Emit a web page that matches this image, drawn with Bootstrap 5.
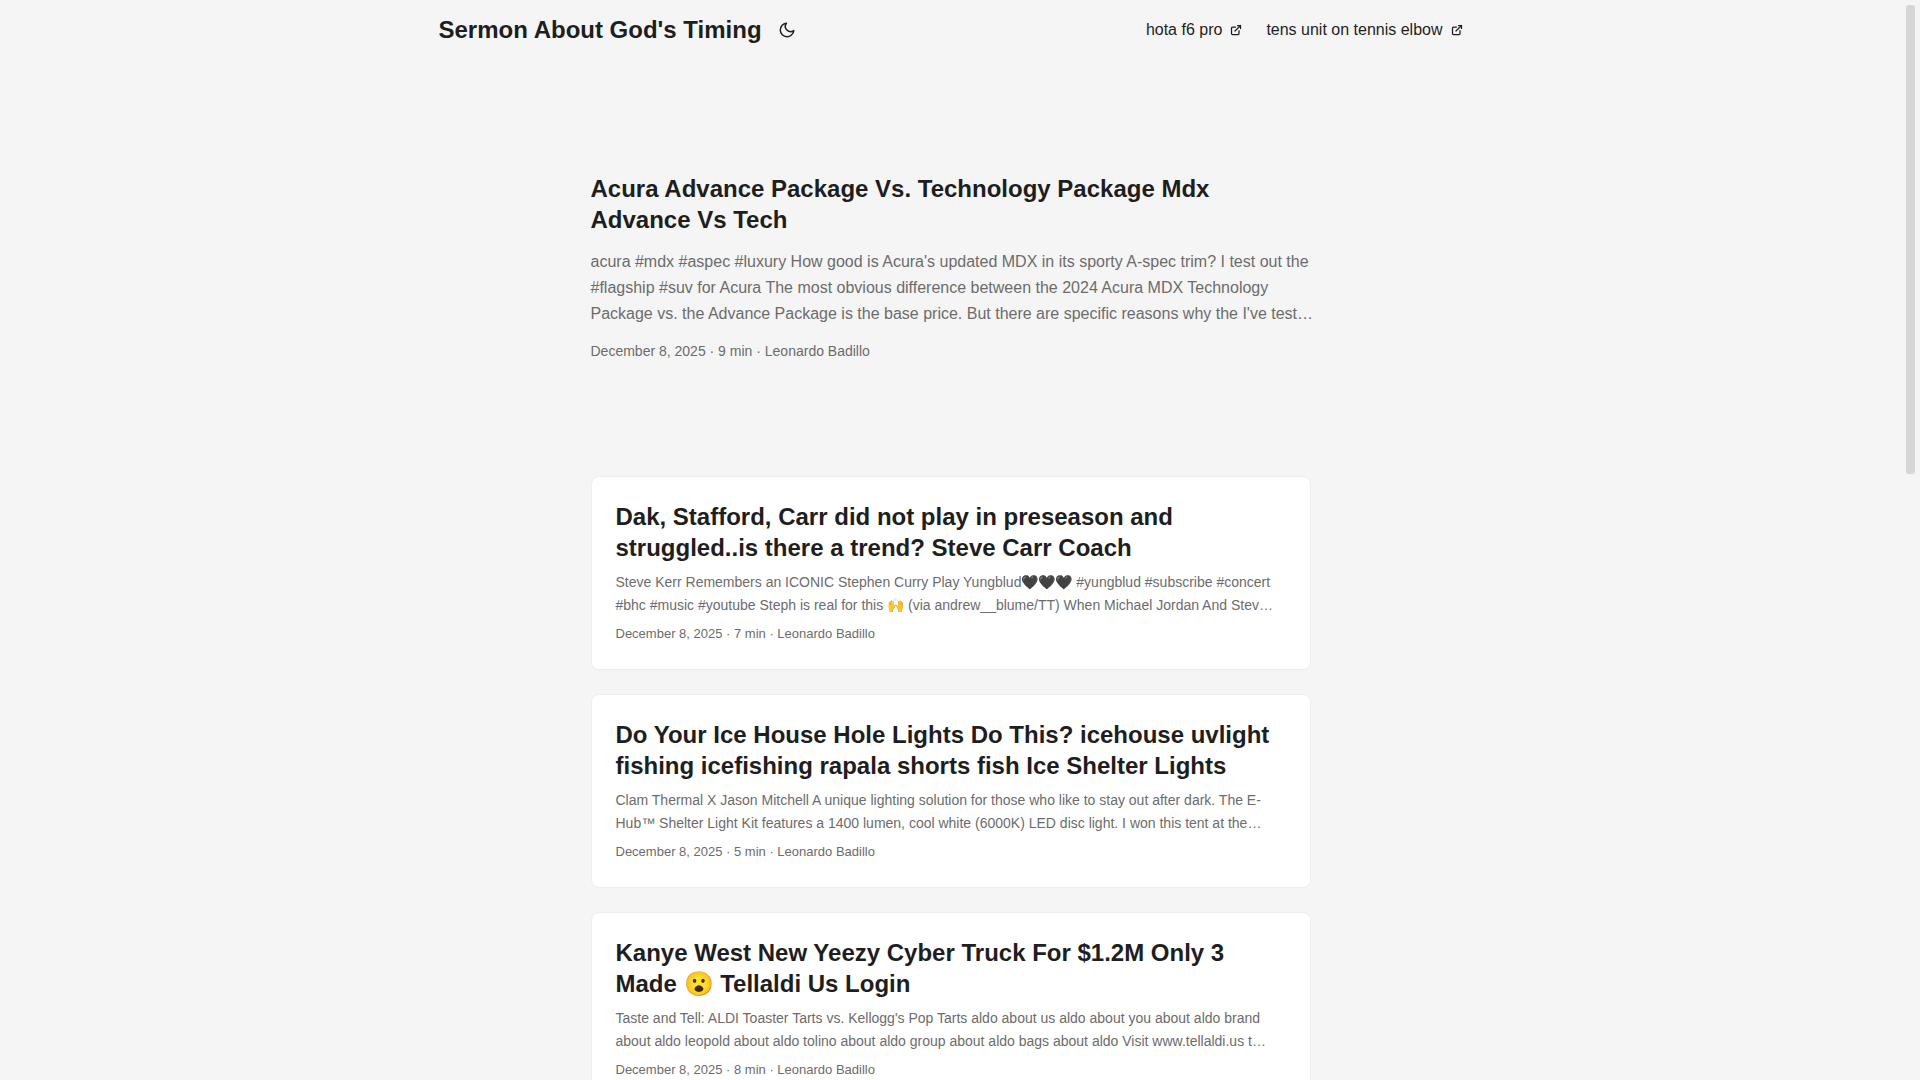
<!DOCTYPE html>
<html lang="en">
<head>
<meta charset="utf-8">
<meta name="viewport" content="width=device-width, initial-scale=1">
<title>Sermon About God's Timing</title>
<link rel="stylesheet" href="https://cdn.jsdelivr.net/npm/bootstrap@5.3.0/dist/css/bootstrap.min.css">
<style>
:root { --theme: #f5f5f5; --entry: #fff; --primary: #1e1e1e; --secondary: #6c6c6c; --line: #eee; --thumb: #d6d6d6; }
body { font-family: "Liberation Sans", Arial, sans-serif; background: var(--theme); color: var(--primary); text-rendering: optimizeLegibility; }
a { color: inherit; text-decoration: none; }
.page-scroll { scrollbar-width: none; }
.scroll-rail { width: 19px; padding: 5px; }
.scroll-thumb { height: 469px; background: var(--thumb); border-radius: 3px; }
.site-nav { max-width: 1072px; min-height: 60px; }
.site-logo { font-size: 24px; line-height: 60px; }
.theme-toggle { line-height: 0; padding: 4px; margin-left: 12px; margin-left: 12px; color: inherit; }
.site-menu { font-size: 16px; line-height: 60px; gap: 24px; }
.site-menu a { gap: 8px; }
.site-main { max-width: 768px; }
.entry-title { font-size: 24px; line-height: 31px; }
.lead-entry { min-height: 320px; margin-bottom: 48px; gap: 14px; }
.entry-text { color: var(--secondary); font-size: 14px; line-height: 23px; margin: 0; }
.entry-meta { color: var(--secondary); font-size: 13px; line-height: 18px; margin-bottom: 2px; }
.lead-entry .entry-text { font-size: 16px; line-height: 26px; margin-right: -8px; }
.lead-entry .entry-meta { font-size: 14px; line-height: 20px; }
.post-entry { background: var(--entry); color: inherit; border: 1px solid var(--line); border-radius: 8px; }
</style>
<script src="https://cdn.jsdelivr.net/npm/bootstrap@5.3.0/dist/js/bootstrap.bundle.min.js"></script>
</head>
<body>
<div class="d-flex vh-100">
<div class="page-scroll flex-grow-1 overflow-auto">
  <header>
    <nav class="site-nav d-flex flex-wrap justify-content-between mx-auto px-4">
      <div class="d-flex align-items-center">
        <a class="site-logo fw-bold" href="#">Sermon About God's Timing</a>
        <button type="button" class="theme-toggle btn border-0" aria-label="Toggle theme">
          <svg width="18" height="18" viewBox="0 0 24 24" fill="none" stroke="currentColor" stroke-width="2" stroke-linecap="round" stroke-linejoin="round"><path d="M21 12.79A9 9 0 1 1 11.21 3 7 7 0 0 0 21 12.79z"/></svg>
        </button>
      </div>
      <ul class="site-menu list-unstyled d-flex m-0">
        <li><a class="d-flex align-items-center" href="#">hota f6 pro
          <svg width="12" height="12" viewBox="0 0 24 24" fill="none" stroke="currentColor" stroke-width="2.5" stroke-linecap="round" stroke-linejoin="round"><path d="M18 13v6a2 2 0 01-2 2H5a2 2 0 01-2-2V8a2 2 0 012-2h6"/><path d="M15 3h6v6"/><path d="M10 14L21 3"/></svg></a></li>
        <li><a class="d-flex align-items-center" href="#">tens unit on tennis elbow
          <svg width="12" height="12" viewBox="0 0 24 24" fill="none" stroke="currentColor" stroke-width="2.5" stroke-linecap="round" stroke-linejoin="round"><path d="M18 13v6a2 2 0 01-2 2H5a2 2 0 01-2-2V8a2 2 0 012-2h6"/><path d="M15 3h6v6"/><path d="M10 14L21 3"/></svg></a></li>
      </ul>
    </nav>
  </header>
  <main class="site-main mx-auto px-4 py-4">
    <article class="lead-entry d-flex flex-column justify-content-center mt-4">
      <h2 class="entry-title fw-bold m-0"><a href="#">Acura Advance Package Vs. Technology Package Mdx Advance Vs Tech</a></h2>
      <p class="entry-text">acura #mdx #aspec #luxury How good is Acura's updated MDX in its sporty A-spec trim? I test out the #flagship #suv for Acura The most obvious difference between the 2024 Acura MDX Technology Package vs. the Advance Package is the base price. But there are specific reasons why the I've test…</p>
      <footer class="entry-meta">December 8, 2025 · 9 min · Leonardo Badillo</footer>
    </article>
    <div class="d-flex flex-column gap-4">
      <article class="post-entry d-flex flex-column gap-2 p-4">
        <h2 class="entry-title fw-bold m-0"><a href="#">Dak, Stafford, Carr did not play in preseason and struggled..is there a trend? Steve Carr Coach</a></h2>
        <p class="entry-text">Steve Kerr Remembers an ICONIC Stephen Curry Play Yungblud🖤🖤🖤 #yungblud #subscribe #concert #bhc #music #youtube Steph is real for this 🙌 (via andrew__blume/TT) When Michael Jordan And Stev…</p>
        <footer class="entry-meta">December 8, 2025 · 7 min · Leonardo Badillo</footer>
      </article>
      <article class="post-entry d-flex flex-column gap-2 p-4">
        <h2 class="entry-title fw-bold m-0"><a href="#">Do Your Ice House Hole Lights Do This? icehouse uvlight fishing icefishing rapala shorts fish Ice Shelter Lights</a></h2>
        <p class="entry-text">Clam Thermal X Jason Mitchell A unique lighting solution for those who like to stay out after dark. The E-Hub™ Shelter Light Kit features a 1400 lumen, cool white (6000K) LED disc light. I won this tent at the…</p>
        <footer class="entry-meta">December 8, 2025 · 5 min · Leonardo Badillo</footer>
      </article>
      <article class="post-entry d-flex flex-column gap-2 p-4">
        <h2 class="entry-title fw-bold m-0"><a href="#">Kanye West New Yeezy Cyber Truck For $1.2M Only 3 Made 😮 Tellaldi Us Login</a></h2>
        <p class="entry-text">Taste and Tell: ALDI Toaster Tarts vs. Kellogg's Pop Tarts aldo about us aldo about you about aldo brand about aldo leopold about aldo tolino about aldo group about aldo bags about aldo Visit www.tellaldi.us t…</p>
        <footer class="entry-meta">December 8, 2025 · 8 min · Leonardo Badillo</footer>
      </article>
    </div>
  </main>
</div>
<div class="scroll-rail flex-shrink-0" aria-hidden="true"><div class="scroll-thumb"></div></div>
</div>
</body>
</html>
